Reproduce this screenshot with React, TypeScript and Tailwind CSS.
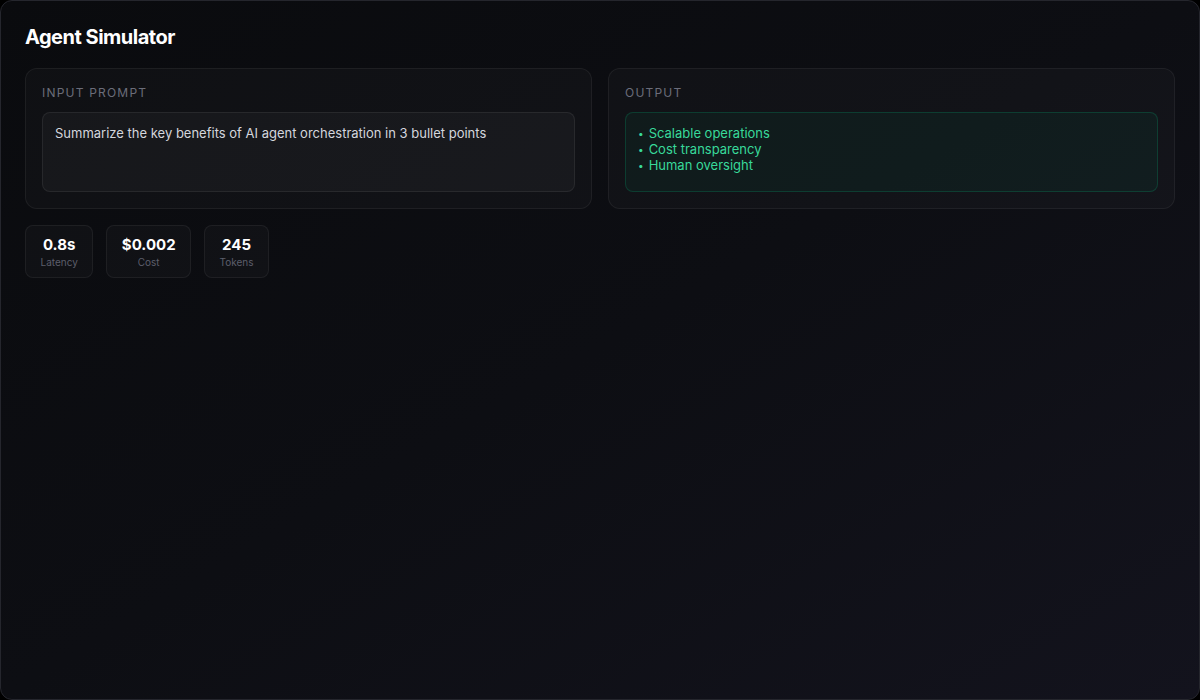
const stats = [
  { value: "0.8s", label: "Latency" },
  { value: "$0.002", label: "Cost" },
  { value: "245", label: "Tokens" },
];

const outputLines = ["Scalable operations", "Cost transparency", "Human oversight"];

export default function App() {
  return (
    <div className="h-[700px] w-[1200px] bg-black font-['Inter','Liberation_Sans',sans-serif]">
      <div className="h-full rounded-xl border border-[#25262d] bg-gradient-to-br from-[#0a0b0e] via-[#0d0e13] to-[#13131d] p-6">
        {/* Header */}
        <h1 className="mb-[19px] text-xl font-bold leading-6 tracking-tight text-white">Agent Simulator</h1>

        {/* Prompt / output panels */}
        <div className="grid grid-cols-2 gap-4">
          <div className="rounded-xl border border-white/[0.06] bg-white/[0.025] p-4">
            <div className="mb-[11px] text-xs leading-4 tracking-[0.1em] text-[#6b6d7a]">INPUT PROMPT</div>
            <div className="h-20 rounded-lg border border-white/[0.07] bg-white/[0.03] px-3 py-3 text-[13px] leading-4 text-[#d4d6dd]">
              Summarize the key benefits of AI agent orchestration in 3 bullet points
            </div>
          </div>

          <div className="rounded-xl border border-white/[0.06] bg-white/[0.025] p-4">
            <div className="mb-[11px] text-xs leading-4 tracking-[0.1em] text-[#6b6d7a]">OUTPUT</div>
            <div className="h-20 rounded-lg border border-emerald-500/20 bg-emerald-500/[0.06] px-3 py-3 text-[13px] leading-4 text-[#38d99a]">
              {outputLines.map((line) => (
                <div key={line}>
                  <span className="mr-[5px] align-[1.5px] text-[10px] leading-none">•</span>
                  {line}
                </div>
              ))}
            </div>
          </div>
        </div>

        {/* Stats */}
        <div className="mt-4 flex gap-[13px]">
          {stats.map((s) => (
            <div
              key={s.label}
              className="flex flex-col items-center rounded-lg border border-white/[0.06] bg-white/[0.025] px-[14.5px] pt-[9px] pb-2"
            >
              <span className="text-[15px] font-bold leading-5 text-white">{s.value}</span>
              <span className="text-[10px] leading-[14px] text-[#5c5e6b]">{s.label}</span>
            </div>
          ))}
        </div>
      </div>
    </div>
  );
}
